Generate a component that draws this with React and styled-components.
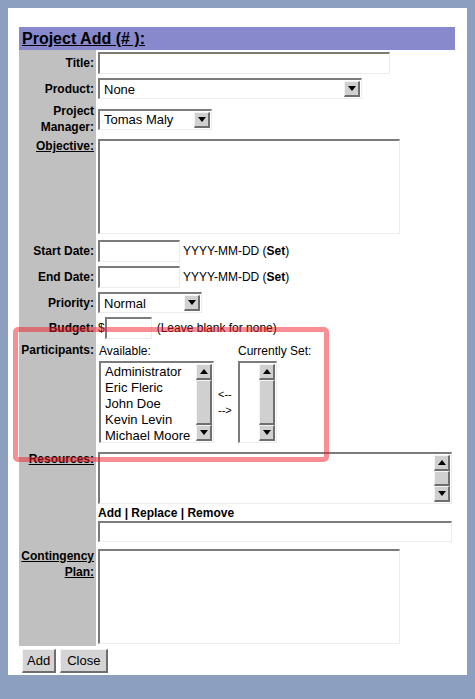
import React from "react";
import styled, { createGlobalStyle } from "styled-components";

const GlobalStyle = createGlobalStyle`
  html, body {
    background: #8c9fc0;
  }
  body {
    margin: 8px;
    font-family: "Liberation Sans", Arial, sans-serif;
    color: #000;
  }
`;

const Panel = styled.div`
  position: relative;
  width: 459px;
  box-sizing: border-box;
  background: #fff;
  padding: 19px 12px 2px 11px;
`;

const TitleBar = styled.div`
  height: 23px;
  background: #8888cc;
  padding-left: 3px;
  font-size: 16px;
  font-weight: bold;
  line-height: 24px;
  text-decoration: underline;
`;

const Form = styled.div`
  display: grid;
  grid-template-columns: 77px 357px;
  column-gap: 2px;
`;

const Label = styled.div`
  background: #c0c0c0;
  padding: ${({ $top }) => ($top ? "1px 2px 2px" : "2px")};
  display: flex;
  flex-direction: column;
  justify-content: ${({ $top }) => ($top ? "flex-start" : "center")};
  text-align: right;
  font-size: 12px;
  font-weight: bold;
  line-height: 16px;
  text-decoration: ${({ $link }) => ($link ? "underline" : "none")};
`;

const Field = styled.div`
  padding: 2px 0 ${({ $extra }) => 2 + ($extra || 0)}px;
  display: flex;
  flex-direction: ${({ $stack }) => ($stack ? "column" : "row")};
  align-items: ${({ $stack }) => ($stack ? "flex-start" : "center")};
  font-size: 12px;
`;

const sunken = `
  box-sizing: border-box;
  border-style: solid;
  border-width: 2px 1px 1px 2px;
  border-color: #7b7b7b #ececec #ececec #7b7b7b;
  background: #fff;
`;

const TextInput = styled.div`
  ${sunken}
  width: ${({ $w }) => $w}px;
  height: ${({ $h }) => $h || 22}px;
  flex: none;
`;

const TextArea = styled.div`
  ${sunken}
  width: 302px;
  height: 95px;
`;

const SelectBox = styled.div`
  ${sunken}
  width: ${({ $w }) => $w}px;
  height: 21px;
  display: flex;
  align-items: center;
  justify-content: space-between;
  padding: 0 1px 0 4px;
  font-size: 13px;
`;

const Bevel = styled.div`
  box-sizing: border-box;
  width: 16px;
  height: ${({ $h }) => $h || 16}px;
  flex: ${({ $grow }) => ($grow ? "1" : "none")};
  background: #d0d0d0;
  border-style: solid;
  border-width: 1px 2px 2px 1px;
  border-color: #f4f4f4 #6e6e6e #6e6e6e #f4f4f4;
  display: flex;
  align-items: center;
  justify-content: center;
`;

const Arrow = styled.span`
  width: 0;
  height: 0;
  border-left: 4px solid transparent;
  border-right: 4px solid transparent;
  ${({ $up }) =>
    $up ? "border-bottom: 5px solid #000;" : "border-top: 5px solid #000;"}
`;

const ListBox = styled.div`
  ${sunken}
  width: ${({ $w }) => $w}px;
  height: ${({ $h }) => $h}px;
  display: flex;
  justify-content: space-between;
  padding: 1px 1px 1px 2px;
`;

const Items = styled.div`
  padding: 0 2px;
  font-size: 13px;
  line-height: 16px;
  white-space: nowrap;
`;

const ScrollBar = styled.div`
  display: flex;
  flex-direction: column;
  width: 16px;
`;

const Hint = styled.span`
  margin-left: ${({ $ml }) => $ml || 3}px;
  white-space: nowrap;
  b {
    font-weight: bold;
  }
`;

const ParticipantsGrid = styled.div`
  display: grid;
  grid-template-columns: 117px 22px auto;
  align-items: center;
  margin-left: 1px;
  margin-bottom: 5px;
`;

const ColHead = styled.div`
  line-height: 16px;
  height: 18px;
`;

const Movers = styled.div`
  display: flex;
  flex-direction: column;
  gap: 2px;
  font-size: 11px;
  line-height: 14px;
  padding-left: 2px;
`;

const Actions = styled.div`
  font-weight: bold;
  line-height: 15px;
  margin-top: 2px;
`;

const ButtonRow = styled.div`
  display: flex;
  gap: 4px;
  padding: 3px 3px 0;
`;

const Button = styled.div`
  box-sizing: border-box;
  height: 24px;
  padding: 0 ${({ $pad }) => $pad}px;
  background: #d4d4d4;
  border-style: solid;
  border-width: 1px 2px 2px 1px;
  border-color: #f4f4f4 #6e6e6e #6e6e6e #f4f4f4;
  font-size: 13px;
  line-height: 21px;
`;

const Highlight = styled.div`
  position: absolute;
  left: 5px;
  top: 319px;
  width: 316px;
  height: 135px;
  box-sizing: border-box;
  border: 5px solid rgba(240, 30, 40, 0.5);
  border-radius: 5px;
  pointer-events: none;
`;

const Select = ({ w, value }) => (
  <SelectBox $w={w}>
    <span>{value}</span>
    <Bevel>
      <Arrow />
    </Bevel>
  </SelectBox>
);

const Scroll = () => (
  <ScrollBar>
    <Bevel>
      <Arrow $up />
    </Bevel>
    <Bevel $grow />
    <Bevel>
      <Arrow />
    </Bevel>
  </ScrollBar>
);

const DateHint = () => (
  <Hint>
    YYYY-MM-DD (<b>Set</b>)
  </Hint>
);

const people = ["Administrator", "Eric Fleric", "John Doe", "Kevin Levin", "Michael Moore"];

export default function App() {
  return (
    <>
      <GlobalStyle />
      <Panel>
        <TitleBar>Project Add (# ):</TitleBar>
        <Form>
          <Label>Title:</Label>
          <Field>
            <TextInput $w={292} />
          </Field>

          <Label>Product:</Label>
          <Field>
            <Select w={264} value="None" />
          </Field>

          <Label>
            <span>Project</span>
            <span>Manager:</span>
          </Label>
          <Field>
            <Select w={114} value="Tomas Maly" />
          </Field>

          <Label $top $link>
            Objective:
          </Label>
          <Field $extra={2}>
            <TextArea />
          </Field>

          <Label>Start Date:</Label>
          <Field>
            <TextInput $w={82} />
            <DateHint />
          </Field>

          <Label>End Date:</Label>
          <Field>
            <TextInput $w={82} />
            <DateHint />
          </Field>

          <Label>Priority:</Label>
          <Field>
            <Select w={104} value="Normal" />
          </Field>

          <Label>Budget:</Label>
          <Field>
            <span>$</span>
            <TextInput $w={47} $h={22} />
            <Hint $ml={5}>(Leave blank for none)</Hint>
          </Field>

          <Label $top>Participants:</Label>
          <Field $stack>
            <ParticipantsGrid>
              <ColHead>Available:</ColHead>
              <span />
              <ColHead>Currently Set:</ColHead>
              <ListBox $w={115} $h={82}>
                <Items>
                  {people.map((p) => (
                    <div key={p}>{p}</div>
                  ))}
                </Items>
                <Scroll />
              </ListBox>
              <Movers>
                <span>&lt;--</span>
                <span>--&gt;</span>
              </Movers>
              <ListBox $w={39} $h={82}>
                <Items />
                <Scroll />
              </ListBox>
            </ParticipantsGrid>
          </Field>

          <Label $top $link>
            Resources:
          </Label>
          <Field $stack $extra={3}>
            <ListBox $w={354} $h={52}>
              <Items />
              <Scroll />
            </ListBox>
            <Actions>Add | Replace | Remove</Actions>
            <TextInput $w={354} $h={21} />
          </Field>

          <Label $top $link>
            <span>Contingency</span>
            <span>Plan:</span>
          </Label>
          <Field>
            <TextArea />
          </Field>
        </Form>
        <ButtonRow>
          <Button $pad={4}>Add</Button>
          <Button $pad={6}>Close</Button>
        </ButtonRow>
        <Highlight />
      </Panel>
    </>
  );
}
